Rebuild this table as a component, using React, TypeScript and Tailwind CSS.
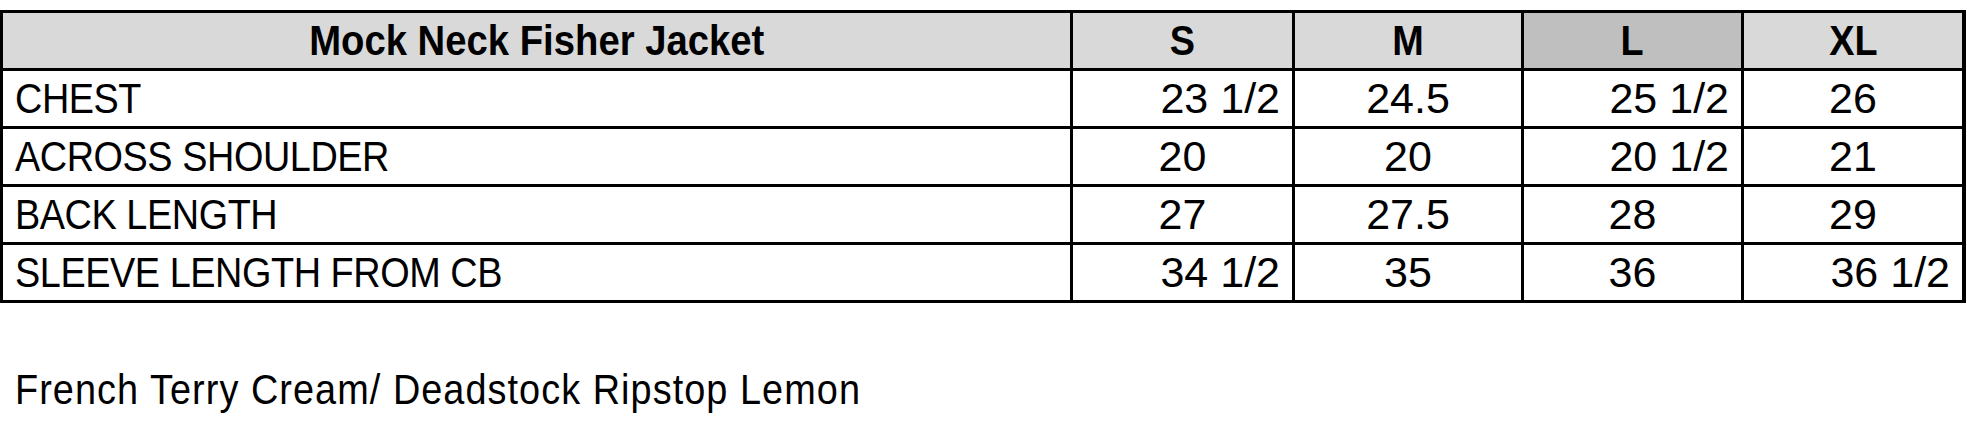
import React from "react";

type Cell = { v: string; right?: boolean };

const sizes = ["S", "M", "L", "XL"];

const rows: { label: string; values: Cell[] }[] = [
  {
    label: "CHEST",
    values: [{ v: "23 1/2", right: true }, { v: "24.5" }, { v: "25 1/2", right: true }, { v: "26" }],
  },
  {
    label: "ACROSS SHOULDER",
    values: [{ v: "20" }, { v: "20" }, { v: "20 1/2", right: true }, { v: "21" }],
  },
  {
    label: "BACK LENGTH",
    values: [{ v: "27" }, { v: "27.5" }, { v: "28" }, { v: "29" }],
  },
  {
    label: "SLEEVE LENGTH FROM CB",
    values: [{ v: "34 1/2", right: true }, { v: "35" }, { v: "36" }, { v: "36 1/2", right: true }],
  },
];

const App = () => {
  return (
    <div className="w-[1967px] h-[422px] bg-white pt-[10px] font-['Liberation_Sans',Arial,sans-serif] text-black">
      <div className="w-[1966px] grid grid-cols-[1067px_219px_226px_217px_218px] auto-rows-[55px] gap-[3px] p-[3px] bg-black">
        <div className="bg-[#d9d9d9] flex items-center justify-center text-[43px] font-bold">
          <span className="inline-block whitespace-nowrap scale-x-[0.89]">Mock Neck Fisher Jacket</span>
        </div>
        {sizes.map((s) => (
          <div
            key={s}
            className={
              s === "L"
                ? "bg-[#bfbfbf] flex items-center justify-center text-[43px] font-bold"
                : "bg-[#d9d9d9] flex items-center justify-center text-[43px] font-bold"
            }
          >
            <span className="inline-block scale-x-[0.88]">{s}</span>
          </div>
        ))}
        {rows.map((row) => (
          <React.Fragment key={row.label}>
            <div className="bg-white flex items-center pl-[12px] text-[43px] tracking-[-0.5px]">
              <span className="inline-block whitespace-nowrap origin-left scale-x-[0.88]">{row.label}</span>
            </div>
            {row.values.map((c, i) => (
              <div
                key={i}
                className={
                  c.right
                    ? "bg-white flex items-center justify-end pr-[12px] text-[43px] whitespace-nowrap"
                    : "bg-white flex items-center justify-center text-[43px] whitespace-nowrap"
                }
              >
                {c.v}
              </div>
            ))}
          </React.Fragment>
        ))}
      </div>
      <div className="mt-[65px] pl-[15px] text-[43px] leading-none">
        <span className="inline-block whitespace-nowrap origin-left scale-x-[0.88] tracking-[1.2px]">
          French Terry Cream/ Deadstock Ripstop Lemon
        </span>
      </div>
    </div>
  );
};

export default App;
